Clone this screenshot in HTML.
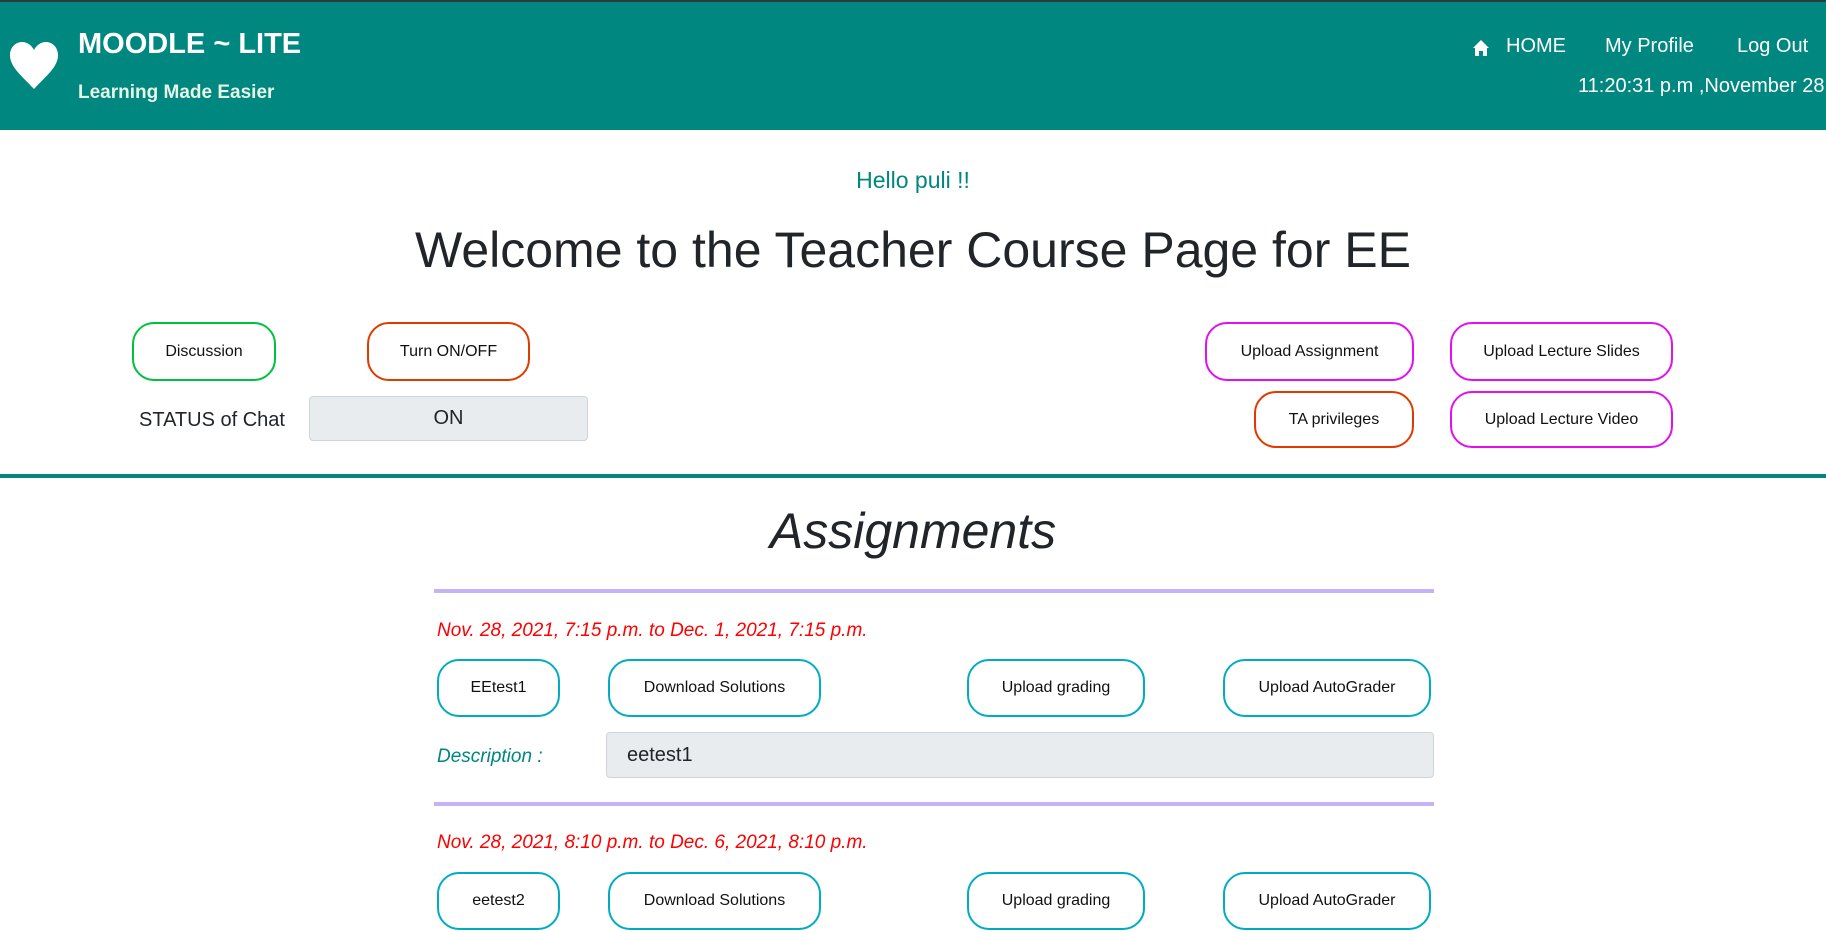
<!DOCTYPE html>
<html><head><meta charset="utf-8"><style>
*{margin:0;padding:0;box-sizing:border-box}
body{width:1826px;height:933px;overflow:hidden;background:#fff;font-family:"Liberation Sans",sans-serif;color:#212529;position:relative}
.a{position:absolute}
.hdr{left:0;top:0;width:1826px;height:130px;background:#00877f;border-top:2px solid #2b3a3a}
.btn{position:absolute;border:2px solid;border-radius:22px;background:#fff;display:flex;align-items:center;justify-content:center;font-size:16px;color:#111}
.g{border-color:#00c040}.o{border-color:#e03a00}.m{border-color:#e010f0}.c{border-color:#00acc1}
.box{position:absolute;background:#e9ecef;border:1px solid #cfd4d9;border-radius:4px;font-size:20px;display:flex;align-items:center}
.pl{position:absolute;left:434px;width:1000px;height:4px;background:#c5b3f9}
.date{position:absolute;left:437px;color:#f00;font-style:italic;font-size:19px}
.nav{position:absolute;top:35px;color:#fff;font-size:20px}
</style></head><body>
<div class="a hdr"></div>
<svg class="a" style="left:9px;top:42px" width="50" height="48" viewBox="0 0 50 48"><path d="M25 47 C12 33 1 25 1 13 C1 5 7 0 13 0 C19 0 23 4 25 8 C27 4 31 0 37 0 C43 0 49 5 49 13 C49 25 38 33 25 47Z" fill="#fff"/></svg>
<div class="a" style="left:78px;top:28px;color:#fff;font-weight:bold;font-size:29px">MOODLE ~ LITE</div>
<div class="a" style="left:78px;top:82px;color:#e6f5e6;font-weight:bold;font-size:19px">Learning Made Easier</div>
<svg class="a" style="left:1472px;top:39px" width="18" height="18" viewBox="0 0 18 18"><path d="M9 1 L17 9 L15 9 L15 17 L11 17 L11 12 L7 12 L7 17 L3 17 L3 9 L1 9Z" fill="#fff"/></svg>
<div class="nav" style="left:1506px">HOME</div>
<div class="nav" style="left:1605px">My Profile</div>
<div class="nav" style="left:1737px">Log Out</div>
<div class="a" style="left:1578px;top:75px;color:#fff;font-size:20px;white-space:nowrap">11:20:31 p.m ,November 28</div>

<div class="a" style="left:0;width:1826px;top:167px;text-align:center;color:#00877f;font-size:23px">Hello puli !!</div>
<div class="a" style="left:0;width:1826px;top:221px;text-align:center;font-size:50px;font-weight:500">Welcome to the Teacher Course Page for EE</div>

<div class="btn g" style="left:132px;top:322px;width:144px;height:59px">Discussion</div>
<div class="btn o" style="left:367px;top:322px;width:163px;height:59px">Turn ON/OFF</div>
<div class="btn m" style="left:1205px;top:322px;width:209px;height:59px">Upload Assignment</div>
<div class="btn m" style="left:1450px;top:322px;width:223px;height:59px">Upload Lecture Slides</div>
<div class="btn o" style="left:1254px;top:391px;width:160px;height:57px">TA privileges</div>
<div class="btn m" style="left:1450px;top:391px;width:223px;height:57px">Upload Lecture Video</div>
<div class="a" style="left:139px;top:409px;font-size:20px">STATUS of Chat</div>
<div class="box" style="left:309px;top:396px;width:279px;height:45px;justify-content:center">ON</div>

<div class="a" style="left:0;top:474px;width:1826px;height:4px;background:#00877f"></div>
<div class="a" style="left:0;width:1826px;top:502px;text-align:center;font-size:50px;font-style:italic;font-weight:500">Assignments</div>

<div class="pl" style="top:589px"></div>
<div class="date" style="top:620px">Nov. 28, 2021, 7:15 p.m. to Dec. 1, 2021, 7:15 p.m.</div>
<div class="btn c" style="left:437px;top:659px;width:123px;height:58px">EEtest1</div>
<div class="btn c" style="left:608px;top:659px;width:213px;height:58px">Download Solutions</div>
<div class="btn c" style="left:967px;top:659px;width:178px;height:58px">Upload grading</div>
<div class="btn c" style="left:1223px;top:659px;width:208px;height:58px">Upload AutoGrader</div>
<div class="a" style="left:437px;top:746px;color:#00877f;font-style:italic;font-size:19px">Description :</div>
<div class="box" style="left:606px;top:732px;width:828px;height:46px;padding-left:20px">eetest1</div>

<div class="pl" style="top:802px"></div>
<div class="date" style="top:832px">Nov. 28, 2021, 8:10 p.m. to Dec. 6, 2021, 8:10 p.m.</div>
<div class="btn c" style="left:437px;top:872px;width:123px;height:58px">eetest2</div>
<div class="btn c" style="left:608px;top:872px;width:213px;height:58px">Download Solutions</div>
<div class="btn c" style="left:967px;top:872px;width:178px;height:58px">Upload grading</div>
<div class="btn c" style="left:1223px;top:872px;width:208px;height:58px">Upload AutoGrader</div>
</body></html>
